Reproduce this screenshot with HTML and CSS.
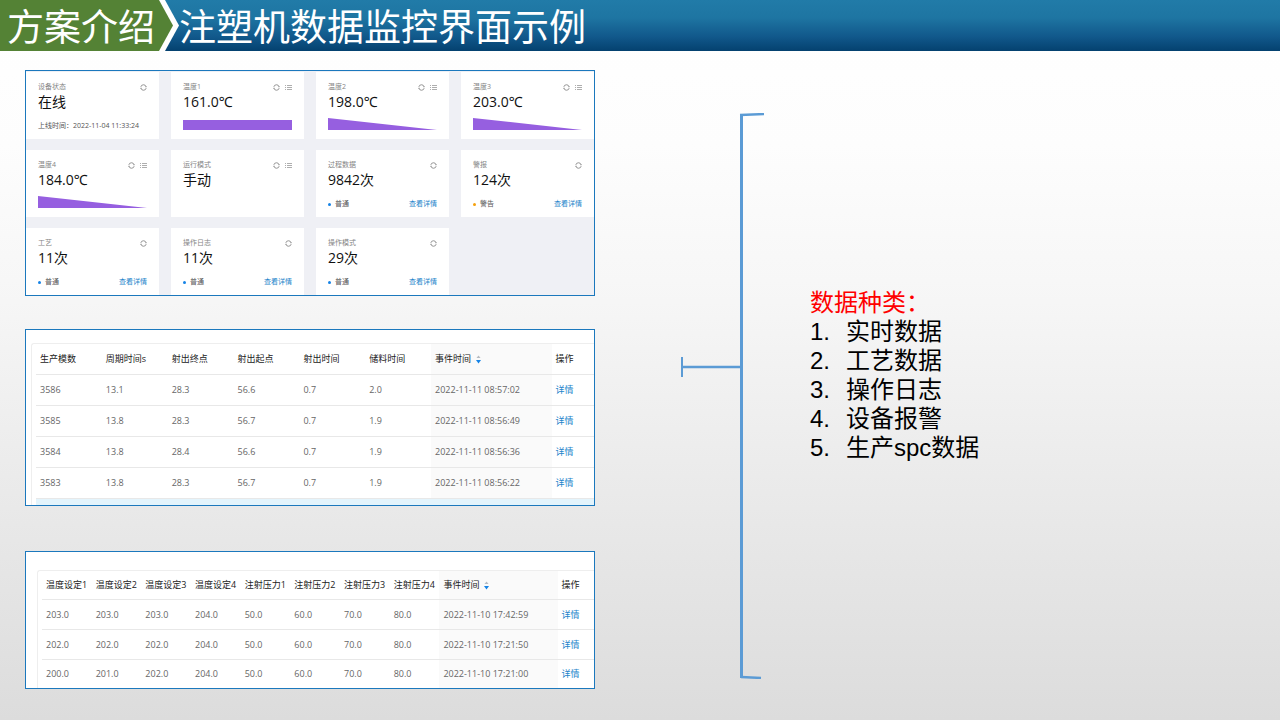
FILE: index.html
```html
<!DOCTYPE html>
<html lang="zh-CN">
<head>
<meta charset="utf-8">
<title>注塑机数据监控界面示例</title>
<link rel="stylesheet" href="styles.css">
</head>
<body>
<svg class="defs" aria-hidden="true">
  <symbol id="refresh" viewBox="0 0 14 14"><path d="M1.600 5.800a5.500 5.500 0 0 1 10.600-.500M12.400 8.200a5.500 5.500 0 0 1-10.600.500M10.500 5.500h2.600M.900 8.500h2.600" fill="none" stroke="currentColor" stroke-width="1.500"/></symbol>
  <symbol id="list" viewBox="0 0 14 14"><path d="M0 3h2M4 3h10M0 7h2M4 7h10M0 11h2M4 11h10" fill="none" stroke="currentColor" stroke-width="1.200"/></symbol>
  <symbol id="wedge" viewBox="0 0 110 12" preserveAspectRatio="none"><path d="M0 0L110 12H0z" fill="#965fe0"/></symbol>
  <symbol id="sort" viewBox="0 0 10 18"><path d="M5 1l4 5H1z" fill="#b5b9bf"/><path d="M0 10h10l-5 7z" fill="#1583e6"/></symbol>
</svg>
<header class="banner">
  <div class="tag"><p class="tag-text">方案介绍</p></div>
  <h1 class="title">注塑机数据监控界面示例</h1>
</header>
<main class="slide">
  <div class="shots">
    <section class="panel cards" aria-label="实时数据">
      <article class="card"><div class="card-head"><h2 class="name">设备状态</h2><button class="icon" aria-label="刷新"><svg><use href="#refresh"/></svg></button></div><p class="value">在线</p><p class="foot">上线时间：2022-11-04 11:33:24</p></article>
      <article class="card"><div class="card-head"><h2 class="name">温度1</h2><button class="icon" aria-label="刷新"><svg><use href="#refresh"/></svg></button><button class="icon" aria-label="列表"><svg><use href="#list"/></svg></button></div><p class="value">161.0℃</p><div class="bar"></div></article>
      <article class="card"><div class="card-head"><h2 class="name">温度2</h2><button class="icon" aria-label="刷新"><svg><use href="#refresh"/></svg></button><button class="icon" aria-label="列表"><svg><use href="#list"/></svg></button></div><p class="value">198.0℃</p><svg class="wedge"><use href="#wedge"/></svg></article>
      <article class="card"><div class="card-head"><h2 class="name">温度3</h2><button class="icon" aria-label="刷新"><svg><use href="#refresh"/></svg></button><button class="icon" aria-label="列表"><svg><use href="#list"/></svg></button></div><p class="value">203.0℃</p><svg class="wedge"><use href="#wedge"/></svg></article>
      <article class="card"><div class="card-head"><h2 class="name">温度4</h2><button class="icon" aria-label="刷新"><svg><use href="#refresh"/></svg></button><button class="icon" aria-label="列表"><svg><use href="#list"/></svg></button></div><p class="value">184.0℃</p><svg class="wedge"><use href="#wedge"/></svg></article>
      <article class="card"><div class="card-head"><h2 class="name">运行模式</h2><button class="icon" aria-label="刷新"><svg><use href="#refresh"/></svg></button><button class="icon" aria-label="列表"><svg><use href="#list"/></svg></button></div><p class="value">手动</p></article>
      <article class="card"><div class="card-head"><h2 class="name">过程数据</h2><button class="icon" aria-label="刷新"><svg><use href="#refresh"/></svg></button></div><p class="value">9842次</p><div class="foot"><i class="dot"></i><span class="level">普通</span><a class="link" href="#">查看详情</a></div></article>
      <article class="card"><div class="card-head"><h2 class="name">警报</h2><button class="icon" aria-label="刷新"><svg><use href="#refresh"/></svg></button></div><p class="value">124次</p><div class="foot"><i class="dot warn"></i><span class="level">警告</span><a class="link" href="#">查看详情</a></div></article>
      <article class="card"><div class="card-head"><h2 class="name">工艺</h2><button class="icon" aria-label="刷新"><svg><use href="#refresh"/></svg></button></div><p class="value">11次</p><div class="foot"><i class="dot"></i><span class="level">普通</span><a class="link" href="#">查看详情</a></div></article>
      <article class="card"><div class="card-head"><h2 class="name">操作日志</h2><button class="icon" aria-label="刷新"><svg><use href="#refresh"/></svg></button></div><p class="value">11次</p><div class="foot"><i class="dot"></i><span class="level">普通</span><a class="link" href="#">查看详情</a></div></article>
      <article class="card"><div class="card-head"><h2 class="name">操作模式</h2><button class="icon" aria-label="刷新"><svg><use href="#refresh"/></svg></button></div><p class="value">29次</p><div class="foot"><i class="dot"></i><span class="level">普通</span><a class="link" href="#">查看详情</a></div></article>
    </section>

    <section class="panel process" aria-label="工艺数据">
      <div class="frame">
        <table class="grid">
          <colgroup><col span="6" class="p-data"><col class="p-time"><col></colgroup>
          <thead><tr><th>生产模数</th><th>周期时间s</th><th>射出终点</th><th>射出起点</th><th>射出时间</th><th>储料时间</th><th class="time">事件时间<svg class="sort"><use href="#sort"/></svg></th><th>操作</th></tr></thead>
          <tbody>
            <tr><td>3586</td><td>13.1</td><td>28.3</td><td>56.6</td><td>0.7</td><td>2.0</td><td class="time">2022-11-11 08:57:02</td><td><a class="link" href="#">详情</a></td></tr>
            <tr><td>3585</td><td>13.8</td><td>28.3</td><td>56.7</td><td>0.7</td><td>1.9</td><td class="time">2022-11-11 08:56:49</td><td><a class="link" href="#">详情</a></td></tr>
            <tr><td>3584</td><td>13.8</td><td>28.4</td><td>56.6</td><td>0.7</td><td>1.9</td><td class="time">2022-11-11 08:56:36</td><td><a class="link" href="#">详情</a></td></tr>
            <tr><td>3583</td><td>13.8</td><td>28.3</td><td>56.7</td><td>0.7</td><td>1.9</td><td class="time">2022-11-11 08:56:22</td><td><a class="link" href="#">详情</a></td></tr>
          </tbody>
        </table>
        <div class="next-row"></div>
      </div>
    </section>

    <section class="panel settings" aria-label="设定数据">
      <div class="frame">
        <table class="grid">
          <colgroup><col span="8" class="s-data"><col class="s-time"><col></colgroup>
          <thead><tr><th>温度设定1</th><th>温度设定2</th><th>温度设定3</th><th>温度设定4</th><th>注射压力1</th><th>注射压力2</th><th>注射压力3</th><th>注射压力4</th><th class="time">事件时间<svg class="sort"><use href="#sort"/></svg></th><th>操作</th></tr></thead>
          <tbody>
            <tr><td>203.0</td><td>203.0</td><td>203.0</td><td>204.0</td><td>50.0</td><td>60.0</td><td>70.0</td><td>80.0</td><td class="time">2022-11-10 17:42:59</td><td><a class="link" href="#">详情</a></td></tr>
            <tr><td>202.0</td><td>202.0</td><td>202.0</td><td>204.0</td><td>50.0</td><td>60.0</td><td>70.0</td><td>80.0</td><td class="time">2022-11-10 17:21:50</td><td><a class="link" href="#">详情</a></td></tr>
            <tr><td>200.0</td><td>201.0</td><td>202.0</td><td>204.0</td><td>50.0</td><td>60.0</td><td>70.0</td><td>80.0</td><td class="time">2022-11-10 17:21:00</td><td><a class="link" href="#">详情</a></td></tr>
          </tbody>
        </table>
      </div>
    </section>
  </div>

  <svg class="bracket" viewBox="0 0 84 566" aria-hidden="true">
    <path d="M60.500 1v564" stroke-width="3"/>
    <path d="M59 2l24-1M60 564l20 1M1 254h59" stroke-width="2.400"/>
    <path d="M1 244v20" stroke-width="2"/>
  </svg>

  <section class="kinds">
    <h2 class="kinds-title">数据种类：</h2>
    <ol class="kinds-list">
      <li><span class="num">1.</span>实时数据</li>
      <li><span class="num">2.</span>工艺数据</li>
      <li><span class="num">3.</span>操作日志</li>
      <li><span class="num">4.</span>设备报警</li>
      <li><span class="num">5.</span>生产spc数据</li>
    </ol>
  </section>
</main>
</body>
</html>
```
FILE: styles.css
```css
* { box-sizing: border-box; }
h1, h2, p, ol { margin: 0; padding: 0; font-weight: 400; }
body {
  margin: 0;
  min-height: 100vh;
  background: linear-gradient(#fff 0, #fdfdfd 20%, #f6f6f6 42%, #ebebeb 66%, #dcdcdc 100%);
  font-family: "Open Sans", "Noto Sans", "Noto Sans CJK SC", sans-serif;
}
.defs { display: none; }

/* banner */
.banner {
  display: flex;
  height: 51px;
  background: linear-gradient(#217ba8 0, #1e75a2 35%, #11588b 72%, #04416f 100%);
  color: #fff;
  font-family: "Noto Sans CJK SC", sans-serif;
  font-size: 37px;
  line-height: 51px;
  white-space: nowrap;
}
.tag {
  padding-right: 6px;
  background: #fff;
  clip-path: polygon(0 0, calc(100% - 14px) 0, 100% 50%, calc(100% - 14px) 100%, 0 100%);
}
.tag-text {
  padding: 0 18px 0 7px;
  background: #548235;
  clip-path: polygon(0 0, calc(100% - 14px) 0, 100% 50%, calc(100% - 14px) 100%, 0 100%);
}
.title { font-size: inherit; }

/* slide body */
.slide {
  display: grid;
  grid-template-columns: 656fr 84px 515fr;
  padding: 19px 0 31px 25px;
}
.shots { min-width: 0; margin-right: 86px; }
.panel { border: 1px solid #1b78bd; background: #fff; overflow: hidden; }

/* metric cards */
.cards {
  display: grid;
  grid-template-columns: repeat(4, 1fr);
  gap: 11px 12px;
  padding-top: 1px;
  background: #eff0f5;
}
.card { height: 67px; padding: 10px 12px 0; background: #fff; }
.card-head { display: flex; gap: 5px; align-items: center; height: 10px; }
.name { flex: 1; color: #858585; font-size: 7px; line-height: 10px; }
.icon { width: 7px; height: 7px; padding: 0; border: 0; background: none; color: #777; }
.icon svg { display: block; width: 7px; height: 7px; }
.value { color: #111; font-size: 14px; line-height: 20px; }
.foot { display: flex; align-items: center; height: 10px; margin-top: 9px; color: #555; font-size: 7px; line-height: 10px; }
.dot { width: 3px; height: 3px; margin-right: 4px; border-radius: 50%; background: #1583e6; }
.warn { background: #f5a00c; }
.level { flex: 1; }
.link { color: #1b83ca; text-decoration: none; }
.bar { height: 10px; margin-top: 8px; background: #965fe0; }
.wedge { display: block; width: 100%; height: 12px; margin-top: 6px; }

/* data tables */
.process { margin-top: 33px; padding: 13px 0 0 5px; }
.settings { margin-top: 45px; padding: 18px 0 0 11px; }
.frame { padding-left: 4px; border: 1px solid #eee; border-width: 1px 0 0 1px; border-top-left-radius: 3px; }
.grid { width: 100%; border-collapse: collapse; table-layout: fixed; }
.grid th, .grid td {
  height: 31px;
  padding: 0 0 0 4px;
  border-bottom: 1px solid #e8e8e8;
  color: #666;
  font-size: 9px;
  font-weight: 400;
  line-height: 12px;
  text-align: left;
  white-space: nowrap;
}
.grid th { height: 30px; color: #222; }
.grid .time { background: #fafafa; }
.p-data { width: 11.800%; }
.p-time { width: 21.600%; }
.s-data { width: 9%; }
.s-time { width: 21.400%; }
.settings .grid th { height: 29px; }
.settings .grid td { height: 30px; }
.settings tbody tr:last-child td { height: 28px; border-bottom: 0; }
.sort { width: 5px; height: 9px; margin-left: 5px; vertical-align: middle; }
.next-row { height: 6px; background: #e3f4fc; }

/* bracket and list */
.bracket { width: 84px; height: 566px; margin-top: 43px; fill: none; stroke: #5b9bd5; }
.kinds {
  padding: 218px 0 0 45px;
  font-family: "Liberation Sans", "Noto Sans CJK SC", sans-serif;
  font-size: 24px;
  line-height: 29px;
}
.kinds-title { color: #f00; font-size: inherit; }
.kinds-list { list-style: none; }
.kinds-list li { display: flex; height: 29px; }
.num { width: 36px; }
```
